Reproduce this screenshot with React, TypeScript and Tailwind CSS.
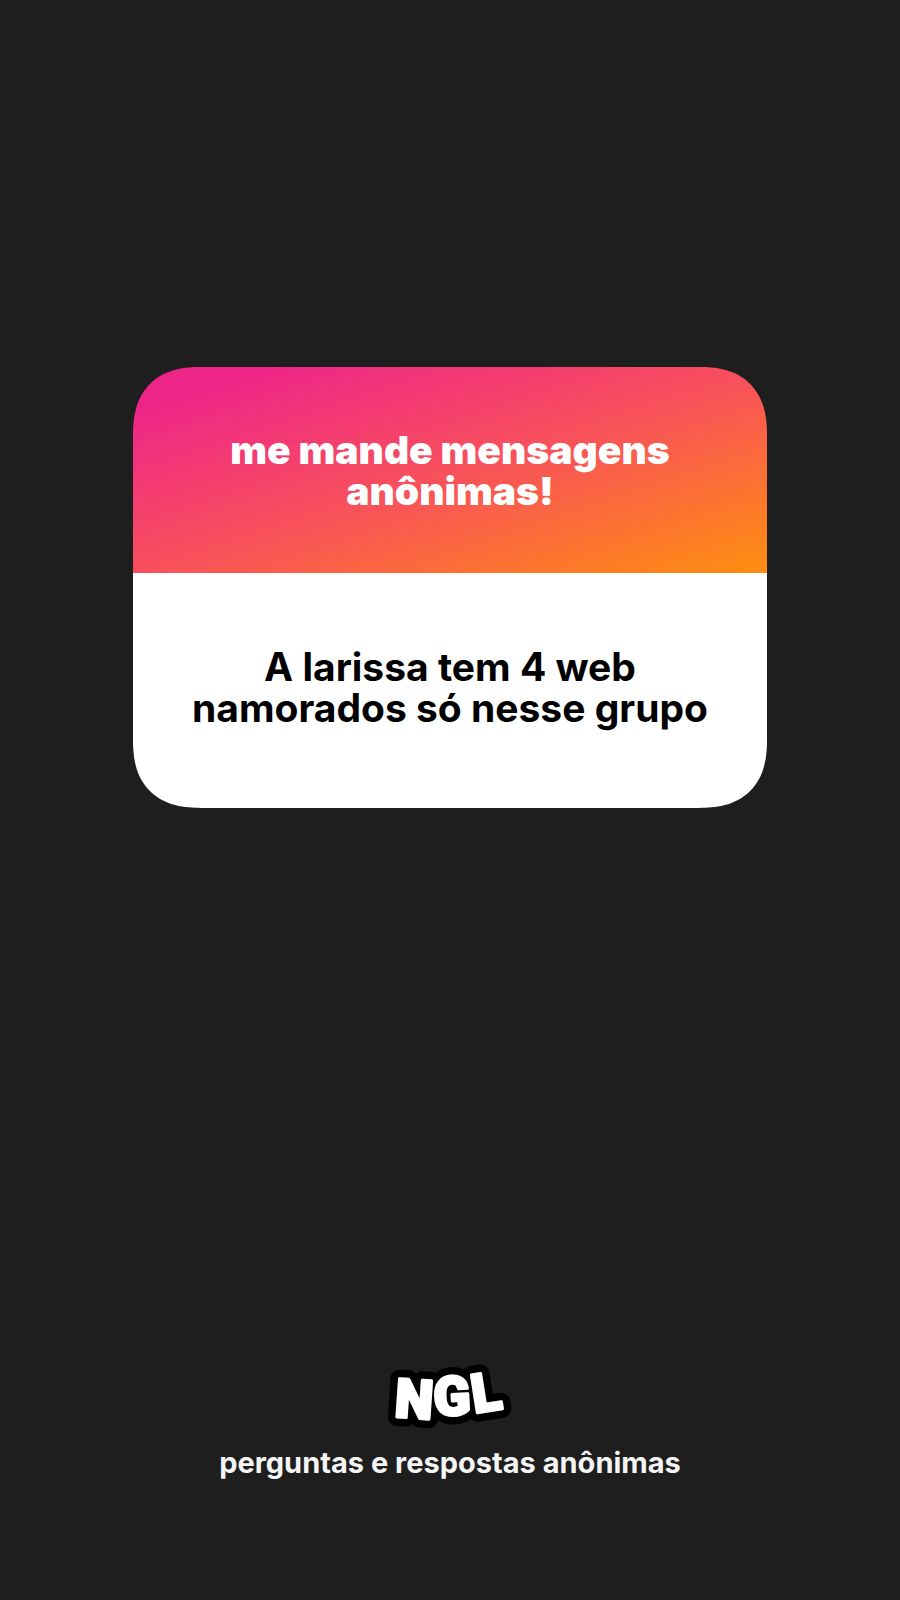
function Logo() {
  return (
    <svg
      viewBox="0 0 124 72"
      role="img"
      aria-label="NGL"
      className="h-[72px] w-[124px] overflow-visible"
      fontFamily="Roboto, sans-serif"
      fontWeight="900"
      fontSize="54"
      textAnchor="middle"
      strokeLinejoin="round"
    >
      {[
        { stroke: "#000", fill: "#000", strokeWidth: 18 },
        { stroke: "#fff", fill: "#fff", strokeWidth: 3 },
      ].map((layer) => (
        <g key={layer.stroke} {...layer}>
          <text transform="translate(25 61) rotate(4)">N</text>
          <text transform="translate(65 58) rotate(-3)">G</text>
          <text transform="translate(101 54) rotate(-9)">L</text>
        </g>
      ))}
    </svg>
  );
}

export default function App() {
  return (
    <main className="flex min-h-screen flex-col items-center bg-[#1e1e1e] px-[133px] pt-[367px] pb-[119px] font-['Inter',sans-serif]">
      <article className="w-full overflow-hidden rounded-[58px] text-center text-[39px] leading-[41px] supports-[corner-shape:squircle]:rounded-[68px] supports-[corner-shape:squircle]:[corner-shape:superellipse(1.28)]">
        <h1 className="bg-[linear-gradient(to_bottom_right,#ee2589_10%,#f8525a_52%,#ff8c12_98%)] px-20 py-[62px] font-black text-white">
          me mande mensagens anônimas!
        </h1>
        <p className="bg-white px-12 pt-[73px] pb-20 font-bold text-black">
          A larissa tem 4 web namorados só nesse grupo
        </p>
      </article>
      <footer className="mt-auto flex flex-col items-center gap-4">
        <Logo />
        <p className="text-center text-[29px] leading-9 font-bold text-[#f5f5f5]">
          perguntas e respostas anônimas
        </p>
      </footer>
    </main>
  );
}
